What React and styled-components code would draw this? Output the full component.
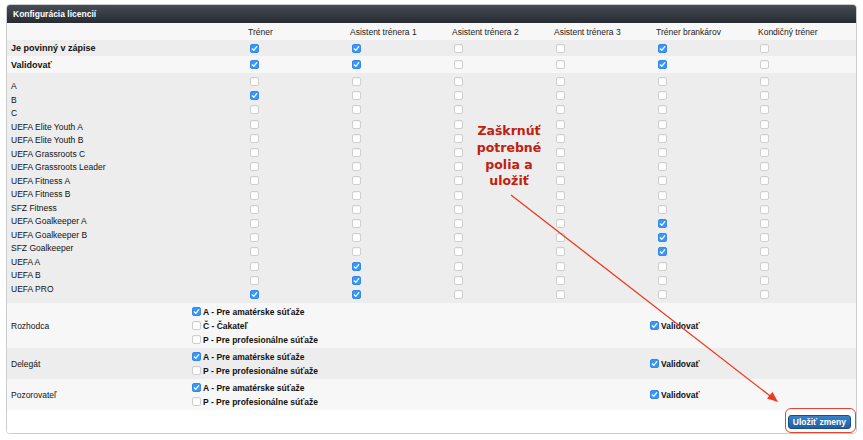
import React from 'react';
import styled, { createGlobalStyle } from 'styled-components';

const GlobalStyle = createGlobalStyle`
  body {
    margin: 0;
    background: #fff;
    font-family: "Liberation Sans", Arial, sans-serif;
    color: #111;
  }
`;

const columns = [
  'Tréner',
  'Asistent trénera 1',
  'Asistent trénera 2',
  'Asistent trénera 3',
  'Tréner brankárov',
  'Kondičný tréner',
];

const licences = [
  { name: 'A', checked: [] },
  { name: 'B', checked: [0] },
  { name: 'C', checked: [] },
  { name: 'UEFA Elite Youth A', checked: [] },
  { name: 'UEFA Elite Youth B', checked: [] },
  { name: 'UEFA Grassroots C', checked: [] },
  { name: 'UEFA Grassroots Leader', checked: [] },
  { name: 'UEFA Fitness A', checked: [] },
  { name: 'UEFA Fitness B', checked: [] },
  { name: 'SFZ Fitness', checked: [] },
  { name: 'UEFA Goalkeeper A', checked: [4] },
  { name: 'UEFA Goalkeeper B', checked: [4] },
  { name: 'SFZ Goalkeeper', checked: [4] },
  { name: 'UEFA A', checked: [1] },
  { name: 'UEFA B', checked: [1] },
  { name: 'UEFA PRO', checked: [0, 1] },
];

const officials = [
  {
    name: 'Rozhodca',
    height: 45,
    light: true,
    options: [
      { label: 'A - Pre amatérske súťaže', checked: true },
      { label: 'Č - Čakateľ', checked: false },
      { label: 'P - Pre profesionálne súťaže', checked: false },
    ],
  },
  {
    name: 'Delegát',
    height: 31,
    light: false,
    options: [
      { label: 'A - Pre amatérske súťaže', checked: true },
      { label: 'P - Pre profesionálne súťaže', checked: false },
    ],
  },
  {
    name: 'Pozorovateľ',
    height: 31,
    light: true,
    options: [
      { label: 'A - Pre amatérske súťaže', checked: true },
      { label: 'P - Pre profesionálne súťaže', checked: false },
    ],
  },
];

const Page = styled.div`
  position: relative;
  width: 863px;
  height: 440px;
  padding: 4px 6px 0 6px;
  box-sizing: border-box;
`;

const Panel = styled.div`
  width: 851px;
  box-sizing: border-box;
  border: 1px solid #cdcdcd;
  border-radius: 4px;
  overflow: hidden;
`;

const TitleBar = styled.div`
  height: 18px;
  display: flex;
  align-items: center;
  padding-left: 6px;
  background: linear-gradient(#474c55, #272b32);
  color: #fff;
  font-size: 8.5px;
  font-weight: bold;
`;

const Row = styled.div`
  display: grid;
  grid-template-columns: 241px repeat(5, 102px) 1fr;
  height: ${p => p.h}px;
  background: ${p => (p.light ? '#f7f7f7' : '#ededed')};
`;

const LabelCell = styled.div`
  display: flex;
  align-items: center;
  padding-left: 4px;
  font-size: ${p => (p.bold ? 9 : 8.5)}px;
  font-weight: ${p => (p.bold ? 'bold' : 'normal')};
`;

const ColumnTitle = styled.div`
  display: flex;
  align-items: center;
  font-size: 8.5px;
  color: #222;
`;

const CheckCell = styled.div`
  display: flex;
  align-items: center;
  padding-left: 2px;
`;

const LabelStack = styled.div`
  display: flex;
  flex-direction: column;
  justify-content: center;
  padding-left: 4px;
  font-size: 8.5px;
  line-height: 13.5px;
`;

const CheckStack = styled.div`
  display: flex;
  flex-direction: column;
  justify-content: center;
  padding-left: 2px;
`;

const StackItem = styled.div`
  height: 14.2px;
  display: flex;
  align-items: center;
`;

const Box = styled.span`
  display: inline-flex;
  align-items: center;
  justify-content: center;
  flex: none;
  width: 9px;
  height: 9px;
  box-sizing: border-box;
  border-radius: 2px;
  border: 1px solid ${p => (p.checked ? '#2f89ef' : '#cfcfcf')};
  background: ${p => (p.checked ? '#3a97f7' : '#fff')};
  box-shadow: ${p => (p.checked ? 'none' : 'inset 0 1px 1px rgba(0,0,0,0.05)')};
`;

const OfficialRow = styled.div`
  display: grid;
  grid-template-columns: 181px 1fr 208px;
  height: ${p => p.h}px;
  background: ${p => (p.light ? '#f7f7f7' : '#ededed')};
`;

const OptionList = styled.div`
  display: flex;
  flex-direction: column;
  justify-content: center;
  padding-left: 4px;
`;

const Option = styled.label`
  display: flex;
  align-items: center;
  gap: 2px;
  height: 14px;
  font-size: 8.5px;
  font-weight: bold;
`;

const Footer = styled.div`
  height: 23px;
  display: flex;
  justify-content: flex-end;
  align-items: center;
  padding-right: 5px;
  background: #fff;
`;

const SaveButton = styled.button`
  height: 14px;
  padding: 0 4px;
  border: 1px solid #174f8a;
  border-radius: 3px;
  background: linear-gradient(#3a82c8, #1f5f9f);
  color: #fff;
  font-family: "Liberation Sans", Arial, sans-serif;
  font-size: 8.5px;
  font-weight: bold;
  line-height: 12px;
`;

const Note = styled.div`
  position: absolute;
  left: 450px;
  top: 123px;
  width: 118px;
  text-align: center;
  font-family: "DejaVu Sans", Verdana, sans-serif;
  font-size: 12.5px;
  font-weight: bold;
  line-height: 16.8px;
  color: #c0200f;
`;

const Highlight = styled.div`
  position: absolute;
  left: 785px;
  top: 408px;
  width: 71px;
  height: 25px;
  box-sizing: border-box;
  border: 1.5px solid #e8412f;
  border-radius: 6px;
`;

const Overlay = styled.svg`
  position: absolute;
  left: 0;
  top: 0;
  pointer-events: none;
`;

const Check = ({ checked }) => (
  <Box checked={checked}>
    {checked && (
      <svg width="7" height="7" viewBox="0 0 7 7">
        <path d="M1.2 3.8 L2.8 5.3 L5.8 1.6" fill="none" stroke="#fff" strokeWidth="1.2" strokeLinecap="round" strokeLinejoin="round" />
      </svg>
    )}
  </Box>
);

const required = [0, 1, 4];

const App = () => {
  return (
    <Page>
      <GlobalStyle />
      <Panel>
        <TitleBar>Konfigurácia licencií</TitleBar>
        <Row h={17} light>
          <div />
          {columns.map(c => (
            <ColumnTitle key={c}>{c}</ColumnTitle>
          ))}
        </Row>
        <Row h={16}>
          <LabelCell bold>Je povinný v zápise</LabelCell>
          {columns.map((c, i) => (
            <CheckCell key={c}>
              <Check checked={required.includes(i)} />
            </CheckCell>
          ))}
        </Row>
        <Row h={17} light>
          <LabelCell bold>Validovať</LabelCell>
          {columns.map((c, i) => (
            <CheckCell key={c}>
              <Check checked={required.includes(i)} />
            </CheckCell>
          ))}
        </Row>
        <Row h={230}>
          <LabelStack>
            {licences.map(l => (
              <div key={l.name}>{l.name}</div>
            ))}
          </LabelStack>
          {columns.map((c, i) => (
            <CheckStack key={c}>
              {licences.map(l => (
                <StackItem key={l.name}>
                  <Check checked={l.checked.includes(i)} />
                </StackItem>
              ))}
            </CheckStack>
          ))}
        </Row>
        {officials.map(o => (
          <OfficialRow key={o.name} h={o.height} light={o.light}>
            <LabelCell>{o.name}</LabelCell>
            <OptionList>
              {o.options.map(opt => (
                <Option key={opt.label}>
                  <Check checked={opt.checked} />
                  {opt.label}
                </Option>
              ))}
            </OptionList>
            <CheckCell>
              <Option>
                <Check checked />
                Validovať
              </Option>
            </CheckCell>
          </OfficialRow>
        ))}
        <Footer>
          <SaveButton>Uložiť zmeny</SaveButton>
        </Footer>
      </Panel>

      <Note>
        Zaškrnúť
        <br />
        potrebné
        <br />
        polia a
        <br />
        uložiť
      </Note>
      <Overlay width="863" height="440">
        <line x1="511" y1="195" x2="774" y2="399" stroke="#ec3a22" strokeWidth="1.3" />
        <polygon points="778,402 767,398.5 772.5,392" fill="#ec3a22" />
      </Overlay>
      <Highlight />
    </Page>
  );
};

export default App;
